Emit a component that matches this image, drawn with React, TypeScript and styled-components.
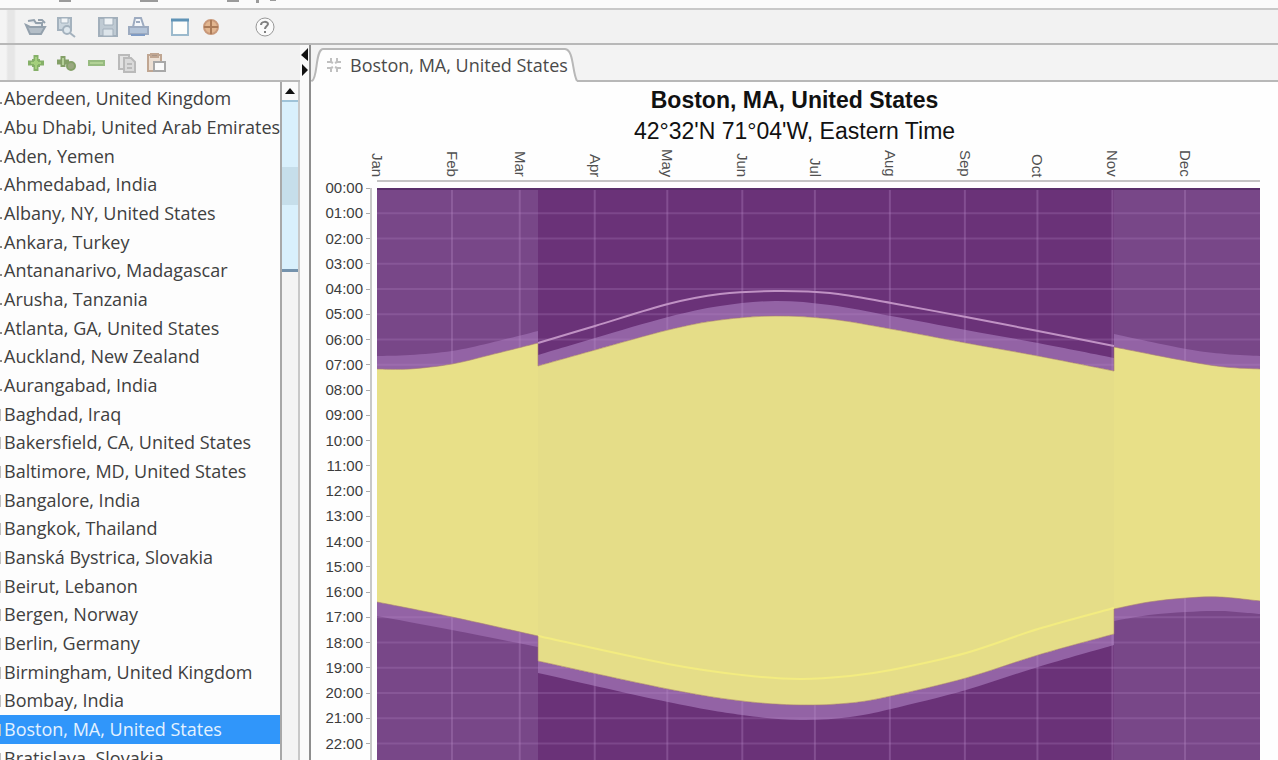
import React from 'react';
import styled, { createGlobalStyle } from 'styled-components';

const Global = createGlobalStyle`
  * { box-sizing: border-box; }
  body { margin: 0; background: #fdfdfd; font-family: "Open Sans", "Noto Sans", sans-serif; color: #3c3c3c; }
`;

const Shell = styled.div`
  height: 100vh;
  display: flex;
  flex-direction: column;
  overflow: hidden;
`;

const MenuStrip = styled.div`
  height: 10px;
  flex: none;
  background: #fafafa;
  border-bottom: 2px solid #c8c8c8;
  svg { display: block; }
`;

const Toolbar = styled.div<{ $height: number }>`
  height: ${p => p.$height}px;
  flex: none;
  display: flex;
  align-items: center;
  background: linear-gradient(to right, #f4f4f4 6px, #e6e6e6 8px, #e6e6e6 14px, #f2f2f2 16px);
  padding-left: 24px;
  border-bottom: 2px solid #b8b8b8;
`;

const ToolButton = styled.button<{ $gap?: number }>`
  width: 24px;
  height: 24px;
  margin-right: ${p => p.$gap ?? 6}px;
  padding: 0;
  border: 0;
  background: none;
  flex: none;
  svg { display: block; }
`;

const Workspace = styled.div`
  flex: 1;
  min-height: 0;
  display: grid;
  grid-template-columns: 300px 9px minmax(0, 1fr);
`;

const Side = styled.aside`
  display: flex;
  flex-direction: column;
  min-height: 0;
`;

const ListArea = styled.div`
  flex: 1;
  min-height: 0;
  display: flex;
`;

const CityList = styled.ul`
  flex: 1;
  min-width: 0;
  margin: 0;
  padding: 2px 0 0;
  list-style: none;
  overflow: hidden;
  background: #fdfdfd;
`;

const City = styled.li<{ $selected: boolean; $dot: boolean }>`
  height: 29px;
  line-height: 28px;
  padding-left: 4px;
  font-size: 18px;
  white-space: nowrap;
  background-color: ${p => (p.$selected ? '#3096fa' : 'transparent')};
  background-image: ${p => (p.$dot ? 'linear-gradient(#888, #888)' : 'linear-gradient(#c0c0c0, #c0c0c0)')};
  background-repeat: no-repeat;
  background-position: ${p => (p.$dot ? '0 18px' : '0 9px')};
  background-size: ${p => (p.$dot ? '2px 2px' : '1px 12px')};
  color: ${p => (p.$selected ? '#e4f2ff' : '#404040')};
  &:nth-child(3n) { height: 28px; }
`;

const Scrollbar = styled.div`
  width: 20px;
  flex: none;
  display: flex;
  flex-direction: column;
  background: #f4f4f4;
  border-left: 2px solid #a8a8a8;
  border-right: 2px solid #c8c8c8;
`;

const ScrollUp = styled.button`
  height: 18px;
  padding: 0;
  border: 0;
  background: #fafafa;
  svg { display: block; margin: 0 auto; }
`;

const Thumb = styled.div`
  height: 172px;
  display: flex;
  align-items: center;
  background: #d9f0fc;
  border-top: 2px solid #9fc3d8;
  border-bottom: 3px solid #7593ad;
  &::before { content: ""; flex: 1; height: 38px; background: #c6deea; }
`;

const Splitter = styled.div`
  background: #fafafa;
  svg { display: block; }
`;

const Main = styled.main`
  display: flex;
  flex-direction: column;
  min-width: 0;
  min-height: 0;
  border-left: 2px solid #8e8e8e;
`;

const TabBar = styled.div`
  height: 37px;
  flex: none;
  display: flex;
  align-items: flex-end;
  background: #f3f3f3;
  border-bottom: 2px solid #b8b8b8;
`;

const Tab = styled.button`
  position: relative;
  width: 268px;
  height: 34px;
  margin-bottom: -2px;
  padding: 0 0 0 15px;
  border: 0;
  background: none;
  display: flex;
  align-items: center;
  gap: 8px;
  font: 18px "Open Sans", "Noto Sans", sans-serif;
  color: #4a4a4a;
  white-space: nowrap;
`;

const TabShape = styled.svg`
  position: absolute;
  left: 0;
  top: 0;
`;

const TabText = styled.span`
  position: relative;
`;

const TabIcon = styled.svg`
  position: relative;
  flex: none;
`;

const Page = styled.section`
  flex: 1;
  min-height: 0;
  overflow: hidden;
  padding: 4px 18px 0 9px;
  background: #fefefe;
  font-family: "Liberation Sans", sans-serif;
`;

const Titles = styled.header`
  padding-left: 9px;
  text-align: center;
  color: #111;
`;

const Title = styled.h1`
  margin: 0;
  font-size: 23px;
  line-height: 28px;
`;

const Subtitle = styled.p`
  margin: 0;
  font-size: 23px;
  line-height: 34px;
`;

const ChartGrid = styled.div`
  display: grid;
  grid-template-columns: 52px minmax(0, 1fr);
  grid-template-rows: 34px 606px;
  column-gap: 5px;
  row-gap: 6px;
`;

const Months = styled.div`
  grid-column: 2;
  display: grid;
  grid-template-columns: 31fr 28fr 31fr 30fr 31fr 30fr 31fr 31fr 30fr 31fr 30fr 31fr;
  align-items: end;
  border-bottom: 2px solid #c4c4c4;
`;

const Month = styled.span`
  width: 16px;
  margin-left: -8px;
  padding-bottom: 3px;
  writing-mode: vertical-rl;
  font-size: 15px;
  line-height: 16px;
  color: #505050;
`;

const Hours = styled.div`
  display: grid;
  grid-template-rows: repeat(24, 1fr);
  border-right: 2px solid #c8c8c8;
`;

const Hour = styled.span`
  display: flex;
  align-items: center;
  justify-content: flex-end;
  gap: 3px;
  height: 16px;
  margin-top: -8px;
  font-size: 15px;
  line-height: 16px;
  color: #3c3c3c;
  &::after { content: ""; width: 4px; height: 1px; background: #aaa; }
`;

const Plot = styled.svg`
  display: block;
  width: 100%;
  height: 100%;
`;

const CITIES = [
  'Aberdeen, United Kingdom', 'Abu Dhabi, United Arab Emirates', 'Aden, Yemen', 'Ahmedabad, India',
  'Albany, NY, United States', 'Ankara, Turkey', 'Antananarivo, Madagascar', 'Arusha, Tanzania',
  'Atlanta, GA, United States', 'Auckland, New Zealand', 'Aurangabad, India', 'Baghdad, Iraq',
  'Bakersfield, CA, United States', 'Baltimore, MD, United States', 'Bangalore, India', 'Bangkok, Thailand',
  'Banská Bystrica, Slovakia', 'Beirut, Lebanon', 'Bergen, Norway', 'Berlin, Germany',
  'Birmingham, United Kingdom', 'Bombay, India', 'Boston, MA, United States', 'Bratislava, Slovakia',
];

const MONTHS = ['Jan', 'Feb', 'Mar', 'Apr', 'May', 'Jun', 'Jul', 'Aug', 'Sep', 'Oct', 'Nov', 'Dec'];
const MONTH_DAYS = [31, 28, 31, 30, 31, 30, 31, 31, 30, 31, 30, 31];
const HOURS = Array.from({ length: 24 }, (_, h) => `${String(h).padStart(2, '0')}:00`);

type Pt = [number, number];

// Plot units: 883 across the year, 606 down the day.
const W = 883;
const H = 606;
const DST_START = 161;
const DST_END = 737;

const sunrise: Pt[][] = [
  [[0, 181], [33, 181], [75, 176], [113, 167], [DST_START, 155]],
  [[DST_START, 178], [218, 162], [291, 142], [343, 132], [398, 128], [453, 131], [514, 141], [589, 155], [661, 168], [DST_END, 183]],
  [[DST_END, 159], [809, 173], [848, 179], [W, 181]],
];
const twilightAm: Pt[][] = [
  [[0, 168], [33, 167], [75, 163], [113, 155], [DST_START, 143]],
  [[DST_START, 167], [218, 150], [291, 129], [343, 118], [398, 113], [453, 117], [514, 128], [589, 142], [661, 155], [DST_END, 170]],
  [[DST_END, 146], [809, 161], [848, 166], [W, 168]],
];
const sunset: Pt[][] = [
  [[0, 414], [75, 429], [DST_START, 448]],
  [[DST_START, 473], [291, 501], [365, 513], [423, 517], [473, 515], [514, 508], [589, 490], [661, 467], [DST_END, 446]],
  [[DST_END, 421], [772, 414], [809, 410], [843, 409], [W, 413]],
];
const twilightPm: Pt[][] = [
  [[0, 428], [75, 442], [DST_START, 459]],
  [[DST_START, 485], [291, 514], [365, 527], [423, 532], [473, 529], [514, 521], [589, 502], [661, 479], [DST_END, 457]],
  [[DST_END, 433], [772, 427], [809, 424], [843, 423], [W, 426]],
];
const standardRise: Pt[] = [[DST_START, 155], [218, 138], [291, 116], [343, 106], [398, 103], [453, 105], [514, 115], [589, 129], [661, 143], [DST_END, 158]];
const standardSet: Pt[] = [[DST_START, 448], [291, 476], [365, 487], [423, 491], [473, 488], [514, 482], [589, 465], [661, 441], [DST_END, 420]];

// Catmull-Rom spline through the points, written as cubic segments.
const curve = (p: Pt[]) =>
  p.slice(1).map((end, i) => {
    const a = p[Math.max(0, i - 1)];
    const b = p[i];
    const d = p[Math.min(p.length - 1, i + 2)];
    return `C${b[0] + (end[0] - a[0]) / 6} ${b[1] + (end[1] - a[1]) / 6} ${end[0] - (d[0] - b[0]) / 6} ${end[1] - (d[1] - b[1]) / 6} ${end[0]} ${end[1]}`;
  }).join('');

const line = (p: Pt[]) => `M${p[0].join(' ')}${curve(p)}`;
const run = (parts: Pt[][], start: string) =>
  parts.map((p, i) => `${i ? 'L' : start}${p[0].join(' ')}${curve(p)}`).join('');
const band = (top: Pt[][], bottom: Pt[][]) => {
  const back = [...bottom].reverse().map(p => [...p].reverse());
  return `${run(top, 'M')}${run(back, 'L')}Z`;
};

const monthX = MONTH_DAYS.map((_, i) => (MONTH_DAYS.slice(0, i).reduce((s, d) => s + d, 0) * W) / 365);

function DaylightPlot() {
  return (
    <Plot viewBox={`0 0 ${W} ${H}`} preserveAspectRatio="none" role="img" aria-label="Daylight through the year">
      <rect width={W} height={H} fill="#784788" />
      <rect x={DST_START} width={DST_END - DST_START} height={H} fill="#6a3278" />
      <path d={band(twilightAm, twilightPm)} fill="#9363a5" />
      <g stroke="#b98bc8" strokeOpacity=".32" strokeWidth="2">
        {monthX.slice(1).map(x => <path key={x} d={`M${x} 0V${H}`} />)}
        {HOURS.slice(1).map((h, i) => <path key={h} d={`M0 ${((i + 1) * H) / 24}H${W}`} strokeOpacity=".24" />)}
      </g>
      <path d={band(sunrise, sunset)} fill="#e8e088" />
      <path d={`M${DST_START} 178${curve(sunrise[1])}V446${curve([...sunset[1]].reverse())}Z`} fill="#e5dd88" />
      <g fill="none">
        <path d={line(standardRise)} stroke="#c092c4" strokeWidth="2" />
        <path d={line(standardSet)} stroke="#f3ec80" strokeWidth="2" />
        <path d={run(sunrise, 'M')} stroke="#a98073" strokeOpacity=".6" />
        <path d={run(sunset, 'M')} stroke="#a98073" strokeOpacity=".6" />
        <path d={`M0 1H${W}`} stroke="#59306a" strokeWidth="2" />
      </g>
    </Plot>
  );
}

const icon = { width: 24, height: 24, viewBox: '0 0 24 24', fill: 'none', strokeWidth: 2 } as const;

const OpenIcon = () => (
  <svg {...icon} stroke="#94a1ad">
    <path d="M4 6l6-1 2 3h6v4" fill="#e3e8ec" /><path d="M2 10l4 2h15l-4 7H6z" fill="#b4bec7" /><path d="M14 5h4l3 3" />
  </svg>
);
const SaveSearchIcon = () => (
  <svg {...icon} stroke="#a4b2be">
    <path d="M4 3h13v12H4z" fill="#cbd6de" /><path d="M7 3h7v5H7z" fill="#f2f5f7" strokeWidth="1" /><circle cx="13" cy="15" r="4" fill="#dfe8ee" /><path d="M16 18l5 4" />
  </svg>
);
const SaveIcon = () => (
  <svg {...icon} stroke="#a2afbb">
    <path d="M3 3h18v18H3z" fill="#bfcad3" /><path d="M8 3h9v7H8z" fill="#eef2f5" strokeWidth="1" /><path d="M7 14h10v7H7z" fill="#dce4ea" strokeWidth="1" />
  </svg>
);
const PrintIcon = () => (
  <svg {...icon} stroke="#9dabc0">
    <path d="M7 12l2-9h6l3 9" fill="#f4f7fb" /><path d="M3 12h19v7H3z" fill="#b4c4d8" /><path d="M5 20h14" stroke="#7f9bc4" /><path d="M10 7h4" />
  </svg>
);
const WindowIcon = () => (
  <svg {...icon} stroke="#9cbacd">
    <path d="M4 5h16v15H4z" fill="#fdfdfb" /><path d="M3 5h18" stroke="#5f93b6" strokeWidth="3" />
  </svg>
);
const GlobeIcon = () => (
  <svg {...icon} stroke="#c9997a">
    <circle cx="13" cy="12" r="7" fill="#e2b690" /><path d="M6 12h14M13 5v14" stroke="#ab7b58" />
  </svg>
);
const HelpIcon = () => (
  <svg {...icon} stroke="#989898">
    <circle cx="13" cy="12" r="9" fill="#fafafa" strokeWidth="1" /><path d="M9 10c0-4 7-4 7-1 0 2-3 2-3 5M13 16v2" stroke="#808080" />
  </svg>
);
const AddIcon = () => (
  <svg {...icon} stroke="#85b068"><path d="M12 4v16M4 12h16" strokeWidth="5" /><path d="M9 9h6v6H9z" fill="#a4cf7c" /><path d="M12 6v12M7 12h10" stroke="#a4cf7c" /></svg>
);
const AddManyIcon = () => (
  <svg {...icon} stroke="#84a068"><path d="M9 5v11M3 11h12" strokeWidth="5" /><path d="M9 7v7" stroke="#b4cf98" /><circle cx="17" cy="15" r="4" fill="#9aa880" /></svg>
);
const RemoveIcon = () => (
  <svg {...icon}><path d="M4 12h17" stroke="#97bb80" strokeWidth="6" /><path d="M6 12h13" stroke="#b2d296" /></svg>
);
const CopyIcon = () => (
  <svg {...icon} stroke="#bababa"><path d="M5 4h10v14H5z" fill="#e3e3e3" /><path d="M10 7h7l4 4v10H10z" fill="#dadada" /><path d="M13 13h5M13 17h5" /></svg>
);
const PasteIcon = () => (
  <svg {...icon} stroke="#c0a692"><path d="M4 4h13v16H4z" fill="#ecdfd3" /><path d="M7 3h7v3H7z" fill="#a99587" /><path d="M10 11h11v9H10z" fill="#fafafa" stroke="#a8a8a8" /></svg>
);

export default function App() {
  return (
    <Shell>
      <Global />
      <MenuStrip>
        <svg width="290" height="4" fill="#9a9a9a" aria-hidden="true">
          <path d="M59 0h12v2H59zM140 0h18v2h-18zM227 0h12v2h-12zM256 0h3v3h-3zM270 0h6v1h-6z" />
        </svg>
      </MenuStrip>
      <Toolbar $height={35}>
        <ToolButton aria-label="Open"><OpenIcon /></ToolButton>
        <ToolButton aria-label="Find" $gap={18}><SaveSearchIcon /></ToolButton>
        <ToolButton aria-label="Save"><SaveIcon /></ToolButton>
        <ToolButton aria-label="Print" $gap={18}><PrintIcon /></ToolButton>
        <ToolButton aria-label="Window"><WindowIcon /></ToolButton>
        <ToolButton aria-label="World" $gap={30}><GlobeIcon /></ToolButton>
        <ToolButton aria-label="Help"><HelpIcon /></ToolButton>
      </Toolbar>
      <Workspace>
        <Side>
          <Toolbar $height={37}>
            <ToolButton aria-label="Add"><AddIcon /></ToolButton>
            <ToolButton aria-label="Add several"><AddManyIcon /></ToolButton>
            <ToolButton aria-label="Remove"><RemoveIcon /></ToolButton>
            <ToolButton aria-label="Copy"><CopyIcon /></ToolButton>
            <ToolButton aria-label="Paste"><PasteIcon /></ToolButton>
          </Toolbar>
          <ListArea>
            <CityList>
              {CITIES.map(c => (
                <City key={c} $selected={c.startsWith('Boston')} $dot={c.startsWith('A')}>{c}</City>
              ))}
            </CityList>
            <Scrollbar>
              <ScrollUp aria-label="Scroll up">
                <svg width="12" height="8" fill="#111"><path d="M6 1l5 6H1z" /></svg>
              </ScrollUp>
              <Thumb />
            </Scrollbar>
          </ListArea>
        </Side>
        <Splitter>
          <svg width="9" height="36" fill="#111"><path d="M8 3v13L1 10zM2 19v12l6-6z" /></svg>
        </Splitter>
        <Main>
          <TabBar>
            <Tab>
              <TabShape width="268" height="34">
                <path d="M0 34C7 30 4 2 12 1H254C263 2 261 24 266 33V34z" fill="#fefefe" />
                <path d="M1 33C7 30 4 2 12 1H254C263 2 261 24 266 33" fill="none" stroke="#b8b8b8" strokeWidth="2" />
              </TabShape>
              <TabIcon width="16" height="16" stroke="#c0c0c0" strokeWidth="2">
                <path d="M5 1v4H1M11 1v4h4M5 15v-4H1M11 15v-4h4M5 5l2 1M11 5l-2 1M5 11l2-1M11 11l-2-1" fill="none" />
              </TabIcon>
              <TabText>Boston, MA, United States</TabText>
            </Tab>
          </TabBar>
          <Page>
            <Titles>
              <Title>Boston, MA, United States</Title>
              <Subtitle>42°32'N 71°04'W, Eastern Time</Subtitle>
            </Titles>
            <ChartGrid>
              <Months>{MONTHS.map(m => <Month key={m}>{m}</Month>)}</Months>
              <Hours>{HOURS.map(h => <Hour key={h}>{h}</Hour>)}</Hours>
              <DaylightPlot />
            </ChartGrid>
          </Page>
        </Main>
      </Workspace>
    </Shell>
  );
}
